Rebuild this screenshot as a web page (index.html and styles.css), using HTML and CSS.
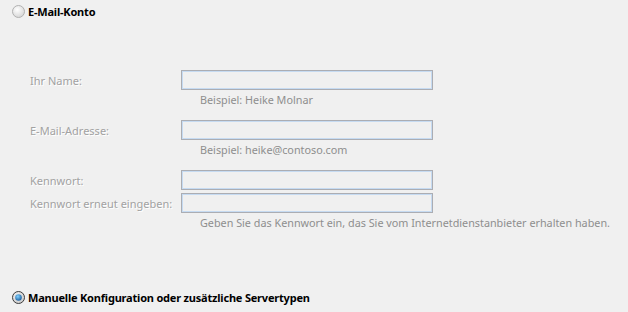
FILE: index.html
```html
<!DOCTYPE html>
<html lang="de">
<head>
    <meta charset="UTF-8">
    <title>Konto hinzufügen</title>
    <link rel="stylesheet" href="styles.css">
</head>
<body>
    <div class="option">
        <svg class="radio" width="13" height="13" viewBox="0 0 13 13">
            <defs>
                <radialGradient id="off" cx="0.4" cy="0.35" r="0.7">
                    <stop offset="0" stop-color="#ffffff"/>
                    <stop offset="1" stop-color="#d4d4d4"/>
                </radialGradient>
            </defs>
            <circle cx="6.5" cy="6.5" r="6" fill="url(#off)" stroke="#b1b1b1"/>
        </svg>
        <span class="option-title">E-Mail-Konto</span>
    </div>

    <form class="account-form">
        <div class="field">
            <label>Ihr Name:</label>
            <input type="text" disabled>
        </div>
        <div class="hint">Beispiel: Heike Molnar</div>

        <div class="field spaced">
            <label>E-Mail-Adresse:</label>
            <input type="text" disabled>
        </div>
        <div class="hint">Beispiel: heike@contoso.com</div>

        <div class="field spaced">
            <label>Kennwort:</label>
            <input type="password" disabled>
        </div>
        <div class="field tight">
            <label>Kennwort erneut eingeben:</label>
            <input type="password" disabled>
        </div>
        <div class="hint">Geben Sie das Kennwort ein, das Sie vom Internetdienstanbieter erhalten haben.</div>
    </form>

    <div class="option bottom">
        <svg class="radio" width="13" height="13" viewBox="0 0 13 13">
            <defs>
                <radialGradient id="ring" cx="0.4" cy="0.35" r="0.7">
                    <stop offset="0" stop-color="#f4f4f4"/>
                    <stop offset="1" stop-color="#c8c8c8"/>
                </radialGradient>
                <radialGradient id="dot" cx="0.4" cy="0.35" r="0.7">
                    <stop offset="0" stop-color="#7fd0ff"/>
                    <stop offset="1" stop-color="#1a5b9a"/>
                </radialGradient>
            </defs>
            <circle cx="6.5" cy="6.5" r="6" fill="url(#ring)" stroke="#3d3d3d"/>
            <circle cx="6.5" cy="6.5" r="3.3" fill="url(#dot)"/>
        </svg>
        <span class="option-title">Manuelle Konfiguration oder zusätzliche Servertypen</span>
    </div>
</body>
</html>
```

FILE: styles.css
```css
body {
    font-family: "Noto Sans", "Open Sans", sans-serif;
    font-size: 11px;
    background-color: #f0f0f0;
    margin: 0;
    padding: 0;
    width: 628px;
    height: 312px;
    overflow: hidden;
    white-space: nowrap;
}

.option {
    display: flex;
    align-items: center;
    gap: 3px;
    padding: 5px 0 0 12px;
    height: 13px;
}

.option.bottom {
    padding-top: 0;
    margin-top: 61px;
}

.radio {
    flex: none;
}

.option-title {
    font-weight: bold;
    font-size: 11px;
    letter-spacing: -0.2px;
    color: #000;
    line-height: 13px;
}

.account-form {
    margin: 52px 0 0 30px;
}

.field {
    display: flex;
    align-items: center;
}

.field.spaced {
    margin-top: 13px;
}

.field.tight {
    margin-top: 3px;
}

label {
    width: 151px;
    color: #a2a2a2;
    text-shadow: 1px 1px 0 #fff;
}

input {
    width: 252px;
    height: 20px;
    box-sizing: border-box;
    margin: 0;
    border: 1px solid #abadb3;
    box-shadow: inset 0 0 0 1px #c6dbf2;
    background-color: #f0f0f0;
}

.hint {
    margin: 2px 0 0 170px;
    line-height: 15px;
    color: #8e8e8e;
    font-size: 10.8px;
}
```
